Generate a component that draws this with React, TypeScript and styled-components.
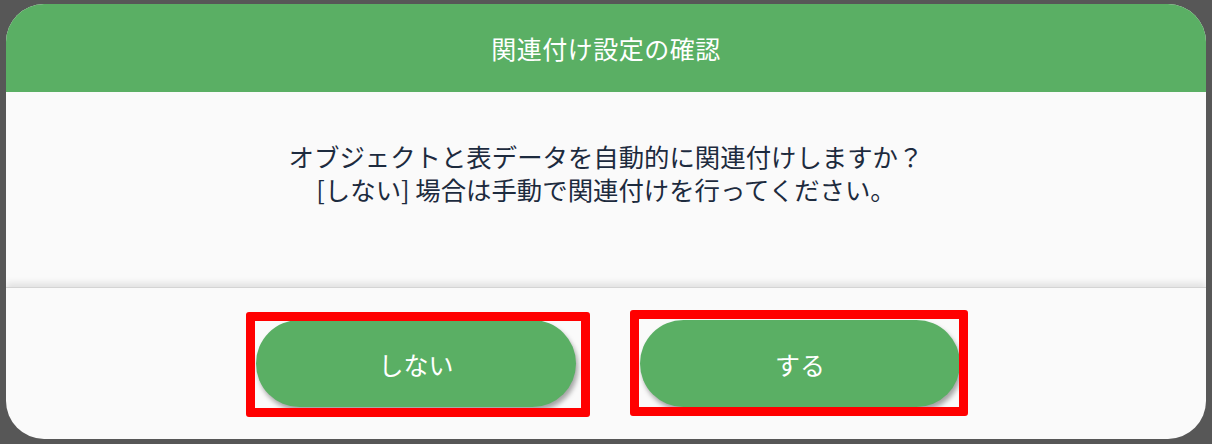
import React from "react"
import styled, { createGlobalStyle } from "styled-components"

const GlobalStyle = createGlobalStyle`
    html, body {
        margin: 0;
        padding: 0;
        background: #575757;
    }
    body {
        font-family: "Noto Sans CJK JP", "Noto Sans", sans-serif;
    }
`

const Backdrop = styled.div`
    width: 1212px;
    height: 444px;
    box-sizing: border-box;
    padding: 4px 6px 5px 6px;
    background: #575757;
`

const Dialog = styled.div`
    width: 1200px;
    height: 435px;
    border-radius: 38px;
    overflow: hidden;
    background: #fafafa;
    display: flex;
    flex-direction: column;
`

const Header = styled.div`
    height: 88px;
    flex-shrink: 0;
    background: #5aaf64;
    color: #ffffff;
    display: flex;
    align-items: center;
    justify-content: center;
    font-size: 25px;
    letter-spacing: 0.5px;
`

const Body = styled.div`
    flex: 1;
    padding-top: 48px;
    text-align: center;
    color: #1d2b3e;
    font-size: 25.4px;
    line-height: 33px;
`

const Footer = styled.div`
    position: relative;
    height: 152px;
    flex-shrink: 0;
    display: flex;
    align-items: center;
    justify-content: center;
    gap: 64px;
    padding-left: 4px;
    box-sizing: border-box;
    border-top: 1px solid #d4d4d4;
    box-shadow: 0 -4px 7px rgba(0, 0, 0, 0.1);
`

const ButtonSlot = styled.div`
    position: relative;
`

const PillButton = styled.button`
    width: 320px;
    height: 87px;
    border: none;
    border-radius: 44px;
    background: #5aaf64;
    color: #ffffff;
    font-family: "Noto Sans CJK JP", "Noto Sans", sans-serif;
    font-size: 25px;
    box-shadow: 2px 4px 5px rgba(0, 0, 0, 0.35);
    cursor: pointer;
`

const Highlight = styled.div<{ $inset: [number, number, number, number] }>`
    position: absolute;
    top: ${(p) => p.$inset[0]}px;
    right: ${(p) => p.$inset[1]}px;
    bottom: ${(p) => p.$inset[2]}px;
    left: ${(p) => p.$inset[3]}px;
    border: 9px solid #ff0000;
    border-radius: 3px;
    pointer-events: none;
`

export default function App() {
    return (
        <>
            <GlobalStyle />
            <Backdrop>
                <Dialog>
                    <Header>関連付け設定の確認</Header>
                    <Body>
                        オブジェクトと表データを自動的に関連付けしますか？
                        <br />
                        [しない] 場合は手動で関連付けを行ってください。
                    </Body>
                    <Footer>
                        <ButtonSlot>
                            <PillButton>しない</PillButton>
                            <Highlight $inset={[-8, -14, -10, -10]} />
                        </ButtonSlot>
                        <ButtonSlot>
                            <PillButton>する</PillButton>
                            <Highlight $inset={[-10, -8, -9, -10]} />
                        </ButtonSlot>
                    </Footer>
                </Dialog>
            </Backdrop>
        </>
    )
}
